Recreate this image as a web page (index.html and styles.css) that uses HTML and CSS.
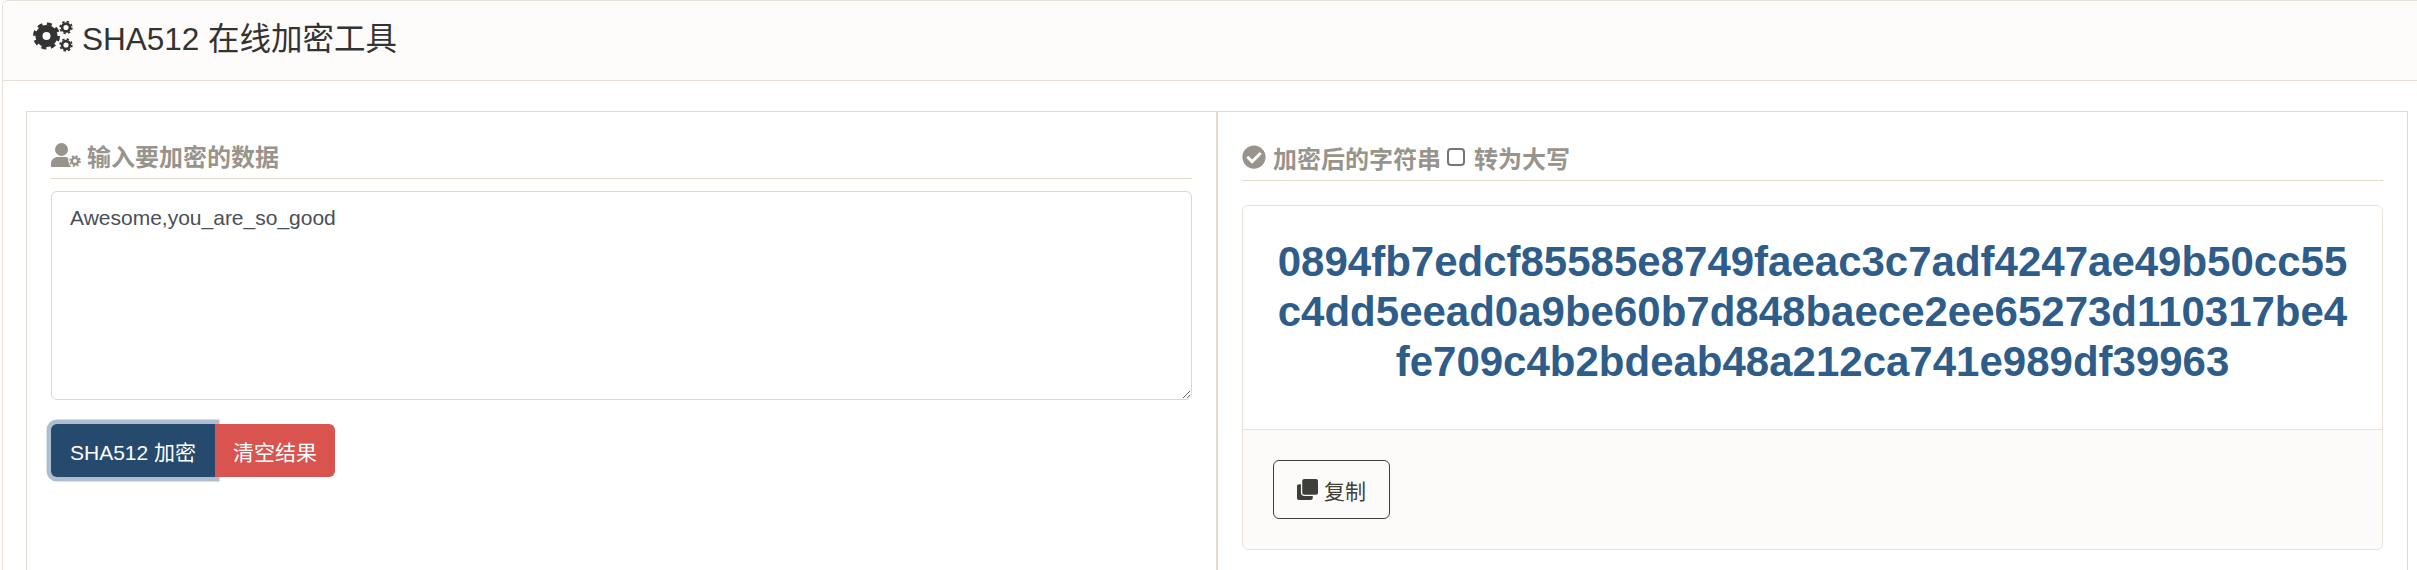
FILE: index.html
```html
<!DOCTYPE html>
<html lang="en">
<head>
  <meta charset="UTF-8">
  <title>SHA512 在线加密工具</title>
  <link rel="stylesheet" href="styles.css">
</head>
<body>
  <div class="card">
    <div class="card-header">
      <svg class="icon-cogs" viewBox="0 0 40 32" aria-hidden="true">
        <circle class="ring" cx="13.5" cy="16" r="7.5" stroke-width="7"/>
        <circle class="ring" cx="13.5" cy="16" r="12" stroke-width="3" stroke-dasharray="5 4.42"/>
        <circle class="ring" cx="33" cy="7.5" r="3.9" stroke-width="2.6"/>
        <circle class="ring" cx="33" cy="7.5" r="5.9" stroke-width="1.6" stroke-dasharray="2.4 2.23"/>
        <circle class="ring" cx="33" cy="25" r="3.9" stroke-width="2.6"/>
        <circle class="ring" cx="33" cy="25" r="5.9" stroke-width="1.6" stroke-dasharray="2.4 2.23"/>
      </svg>
      <h1>SHA512 在线加密工具</h1>
    </div>
    <div class="card-body">
      <div class="row">
        <div class="col">
          <div class="col-title">
            <svg class="icon-user" viewBox="0 0 30 24" aria-hidden="true">
              <circle cx="10.5" cy="6.5" r="6.5" fill="currentColor"/>
              <path d="M0 24v-3.5C0 16.4 3.4 14 7 14h7c1.2 0 2.3.3 3.3.8-.4 3 .5 6.2 2.7 9.2z" fill="currentColor"/>
              <circle class="ring" cx="24" cy="18" r="3.2" stroke-width="2.4"/>
              <circle class="ring" cx="24" cy="18" r="5" stroke-width="1.6" stroke-dasharray="2.1 1.83"/>
            </svg>
            <span>输入要加密的数据</span>
          </div>
          <textarea class="input-text">Awesome,you_are_so_good</textarea>
          <div class="actions">
            <button class="btn btn-primary">SHA512 加密</button><button class="btn btn-danger">清空结果</button>
          </div>
        </div>
        <div class="col col-right">
          <div class="col-title">
            <svg class="icon-check" viewBox="0 0 512 512" aria-hidden="true">
              <path fill="currentColor" d="M504 256c0 136.967-111.033 248-248 248S8 392.967 8 256 119.033 8 256 8s248 111.033 248 248zM227.314 387.314l184-184c6.248-6.248 6.248-16.379 0-22.627l-22.627-22.627c-6.248-6.249-16.379-6.249-22.628 0L216 308.118l-70.059-70.059c-6.248-6.248-16.379-6.248-22.628 0l-22.627 22.627c-6.248 6.248-6.248 16.379 0 22.627l104 104c6.249 6.249 16.379 6.249 22.628.001z"/>
            </svg>
            <span>加密后的字符串</span>
            <input type="checkbox" class="upper-check">
            <span>转为大写</span>
          </div>
          <div class="panel">
            <div class="panel-body">0894fb7edcf85585e8749faeac3c7adf4247ae49b50cc55c4dd5eead0a9be60b7d848baece2ee65273d110317be4fe709c4b2bdeab48a212ca741e989df39963</div>
            <div class="panel-footer">
              <button class="btn btn-copy">
                <svg class="icon-clone" viewBox="0 0 512 512" aria-hidden="true">
                  <path fill="currentColor" d="M464 0c26.51 0 48 21.49 48 48v288c0 26.51-21.49 48-48 48H176c-26.51 0-48-21.49-48-48V48c0-26.51 21.49-48 48-48h288M176 416c-44.112 0-80-35.888-80-80V128H48c-26.51 0-48 21.49-48 48v288c0 26.51 21.49 48 48 48h288c26.51 0 48-21.49 48-48v-48H176z"/>
                </svg>
                <span>复制</span>
              </button>
            </div>
          </div>
        </div>
      </div>
    </div>
  </div>
</body>
</html>
```

FILE: styles.css
```css
html, body {
  height: 570px;
  overflow: hidden;
}
body {
  margin: 0;
  background-color: #fff;
  color: #333;
  font-family: "Liberation Sans", "Noto Sans CJK SC", sans-serif;
  font-size: 21px;
}
.ring {
  fill: none;
  stroke: currentColor;
}
.card {
  width: 2415px;
  height: 570px;
  margin-left: 2px;
  box-sizing: border-box;
  border: 1px solid #e8e0d8;
  border-width: 1px 0 0 1px;
  border-top-left-radius: 6px;
  overflow: hidden;
}
.card-header {
  display: flex;
  align-items: center;
  height: 80px;
  padding-left: 30px;
  padding-bottom: 9px;
  box-sizing: border-box;
  background-color: #fdfcfa;
  border-bottom: 1px solid #e8e0d8;
}
.icon-cogs {
  width: 40px;
  height: 32px;
  margin-right: 9px;
  color: #333;
}
h1 {
  margin: 0;
  font-size: 31.5px;
  font-weight: normal;
  color: #333;
}
.card-body {
  padding: 30px 0 0 23px;
}
.row {
  display: grid;
  grid-template-columns: 1189px 1191px;
  width: 2382px;
  height: 459px;
  box-sizing: border-box;
  border: 1px solid #e3dad2;
  border-bottom: 0;
}
.col {
  padding: 28px 24px 0;
}
.col-right {
  border-left: 2px solid #e3dad2;
  padding-top: 30px;
}
.col-title {
  display: flex;
  align-items: center;
  height: 39px;
  padding-bottom: 8px;
  box-sizing: border-box;
  border-bottom: 1px solid #e5dccd;
  font-size: 24px;
  font-weight: bold;
  color: #98948c;
}
.icon-user {
  width: 30px;
  height: 24px;
  margin-right: 6px;
}
.icon-check {
  width: 24px;
  height: 24px;
  margin-right: 7px;
}
.upper-check {
  appearance: none;
  width: 18px;
  height: 18px;
  margin: 0 9px 0 6px;
  box-sizing: border-box;
  border: 2px solid #767676;
  border-radius: 4px;
  background-color: #fff;
}
.input-text {
  display: block;
  width: 100%;
  height: 209px;
  margin-top: 12px;
  padding: 11px 18px;
  box-sizing: border-box;
  border: 1px solid #d8d8dc;
  border-radius: 6px;
  font-family: inherit;
  font-size: 21px;
  line-height: 30px;
  color: #495057;
}
.actions {
  display: flex;
  margin-top: 24px;
}
.btn {
  height: 53px;
  padding: 0 18px;
  border: 1px solid transparent;
  font-family: inherit;
  font-size: 21px;
  color: #fff;
}
.btn-primary {
  position: relative;
  background-color: #264a6e;
  border-radius: 6px 0 0 6px;
  box-shadow: 0 0 0 4.5px rgba(49, 92, 138, 0.4);
}
.btn-danger {
  position: relative;
  padding: 0 17px;
  background-color: #d9534f;
  border-radius: 0 6px 6px 0;
}
.panel {
  margin-top: 24px;
  border: 1px solid #e8e2da;
  border-radius: 6px;
}
.panel-body {
  height: 224px;
  padding: 31px 30px 0;
  box-sizing: border-box;
  border-bottom: 1px solid #e8e2da;
  font-size: 42px;
  font-weight: bold;
  line-height: 50px;
  text-align: center;
  word-break: break-all;
  color: #2f5d8a;
}
.panel-footer {
  height: 119px;
  padding: 30px 0 0 30px;
  box-sizing: border-box;
  background-color: #fcfbf9;
  border-radius: 0 0 6px 6px;
}
.btn-copy {
  display: flex;
  align-items: center;
  height: 59px;
  padding: 0 23px;
  background: none;
  border: 1px solid #3f3f3f;
  border-radius: 6px;
  color: #3f3f3a;
}
.icon-clone {
  width: 21px;
  height: 21px;
  margin-right: 6px;
}
```
